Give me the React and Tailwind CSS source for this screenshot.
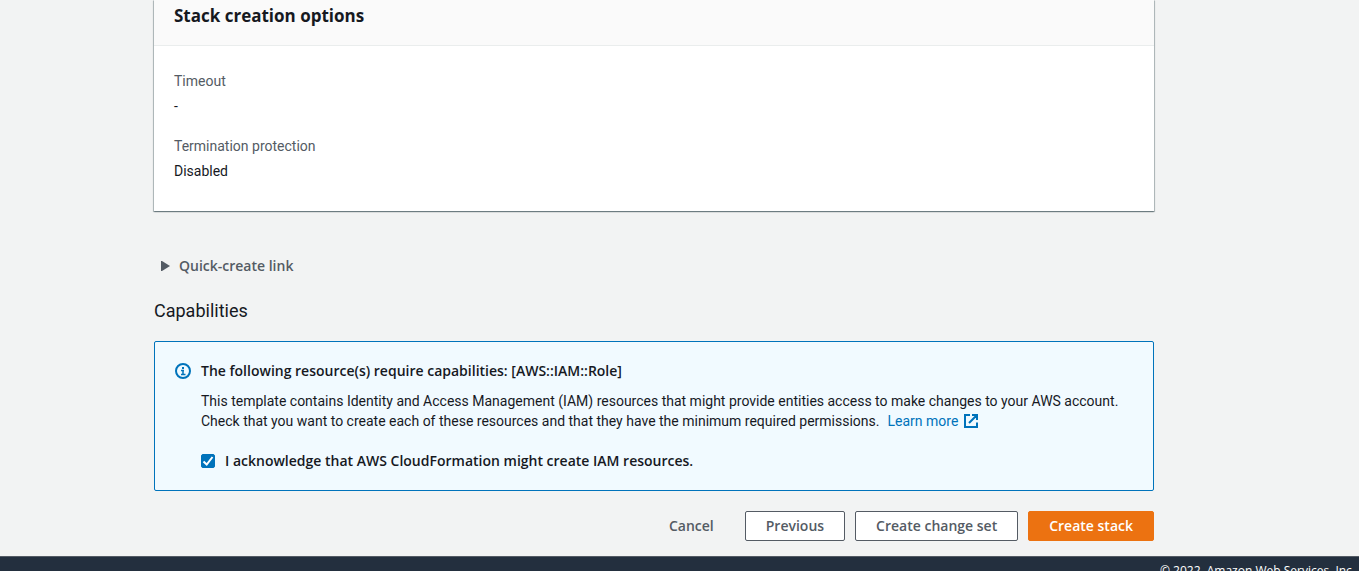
import { useState } from 'react';

function Field({ label, value }) {
  return (
    <div>
      <dt className="text-[#545b64]">{label}</dt>
      <dd className="mt-[5px]">{value}</dd>
    </div>
  );
}

function InfoIcon() {
  return (
    <svg viewBox="0 0 16 16" className="h-4 w-4 shrink-0" fill="none" stroke="#0073bb" strokeWidth="2" aria-hidden="true">
      <circle cx="8" cy="8" r="7" />
      <path d="M6 7.5h3M8 7v4M6 11.5h4.5" strokeWidth="1.5" />
      <path d="M7 5h2" strokeWidth="2" />
    </svg>
  );
}

function ExternalIcon() {
  return (
    <svg viewBox="0 0 14 14" className="ml-1.5 inline-block h-3.5 w-3.5 align-[-2px]" fill="none" stroke="#0073bb" strokeWidth="2" aria-hidden="true">
      <path d="M6 1H1v12h12V8.5M8 1h5v5M13 1 5 9" />
    </svg>
  );
}

function Button({ variant, children }) {
  const styles = {
    link: 'border-transparent text-[#545b64]',
    normal: 'border-[#545b64] bg-white text-[#545b64]',
    primary: 'border-[#ec7211] bg-[#ec7211] text-white',
  };
  return (
    <button type="button" className={`h-[30px] rounded-[2px] border px-5 font-['Open_Sans',sans-serif] font-semibold ${styles[variant]}`}>
      {children}
    </button>
  );
}

export default function App() {
  const [accepted, setAccepted] = useState(true);

  return (
    <div className="flex h-screen flex-col overflow-hidden bg-[#f2f3f3] font-['Roboto',sans-serif] text-sm leading-5 text-[#16191f]">
      <main className="shrink-0 pr-[205px] pb-[15px] pl-[154px]">
        <section className="bg-white shadow-[0_1px_1px_0_rgba(0,28,36,0.3),1px_1px_1px_0_rgba(0,28,36,0.15),-1px_1px_1px_0_rgba(0,28,36,0.15),0_0_0_1px_rgba(0,28,36,0.1)]">
          <header className="border-b border-[#eaeded] bg-[#fafafa] px-5 pt-1 pb-[17px]">
            <h2 className="font-['Open_Sans',sans-serif] text-[17px] leading-6 font-bold">Stack creation options</h2>
          </header>
          <dl className="flex flex-col gap-5 px-5 pt-[25px] pb-[30px]">
            <Field label="Timeout" value="-" />
            <Field label="Termination protection" value="Disabled" />
          </dl>
        </section>

        <button type="button" aria-expanded="false" className="mt-[45px] flex items-center gap-[9px] pl-[7px] font-['Open_Sans',sans-serif] font-semibold text-[#545b64]">
          <svg viewBox="0 0 9 10" className="h-2.5 w-[9px]" fill="#545b64" aria-hidden="true">
            <path d="M0 0h1l8 5-8 5H0z" />
          </svg>
          Quick-create link
        </button>

        <h2 className="mt-[23px] text-lg leading-6">Capabilities</h2>

        <section className="mt-[18px] flex gap-[10px] rounded-[2px] border border-[#0073bb] bg-[#f1faff] px-5 py-[19px]">
          <div className="pt-0.5">
            <InfoIcon />
          </div>
          <div>
            <h3 className="font-['Open_Sans',sans-serif] font-semibold">The following resource(s) require capabilities: [AWS::IAM::Role]</h3>
            <p className="mt-[10px]">
              This template contains Identity and Access Management (IAM) resources that might provide entities access to make changes to your AWS account.
              <br />
              Check that you want to create each of these resources and that they have the minimum required permissions.
              <a href="#learn-more" className="ml-2 text-[#0073bb]">
                Learn more
                <ExternalIcon />
              </a>
            </p>
            <label className="mt-5 flex items-center gap-[10px] font-['Open_Sans',sans-serif] font-semibold">
              <span className="grid h-3.5 w-3.5">
                <input
                  type="checkbox"
                  checked={accepted}
                  onChange={(e) => setAccepted(e.target.checked)}
                  className="col-start-1 row-start-1 h-3.5 w-3.5 appearance-none rounded-[2px] border border-[#687078] bg-white checked:border-[#0073bb] checked:bg-[#0073bb]"
                />
                {accepted && (
                  <svg viewBox="0 0 14 14" className="pointer-events-none col-start-1 row-start-1 h-3.5 w-3.5" fill="none" stroke="#fff" strokeWidth="2" aria-hidden="true">
                    <path d="M2.5 7.5 5.7 10.5 11.5 3" />
                  </svg>
                )}
              </span>
              I acknowledge that AWS CloudFormation might create IAM resources.
            </label>
          </div>
        </section>

        <div className="mt-5 flex justify-end gap-[10px]">
          <Button variant="link">Cancel</Button>
          <Button variant="normal">Previous</Button>
          <Button variant="normal">Create change set</Button>
          <Button variant="primary">Create stack</Button>
        </div>
      </main>

      <footer className="shrink-0 border-t border-[#545b64] bg-[#232f3e] px-1 pt-1 pb-2 text-right font-['Open_Sans',sans-serif] text-xs leading-5 text-white">
        © 2022, Amazon Web Services, Inc.
      </footer>
    </div>
  );
}
